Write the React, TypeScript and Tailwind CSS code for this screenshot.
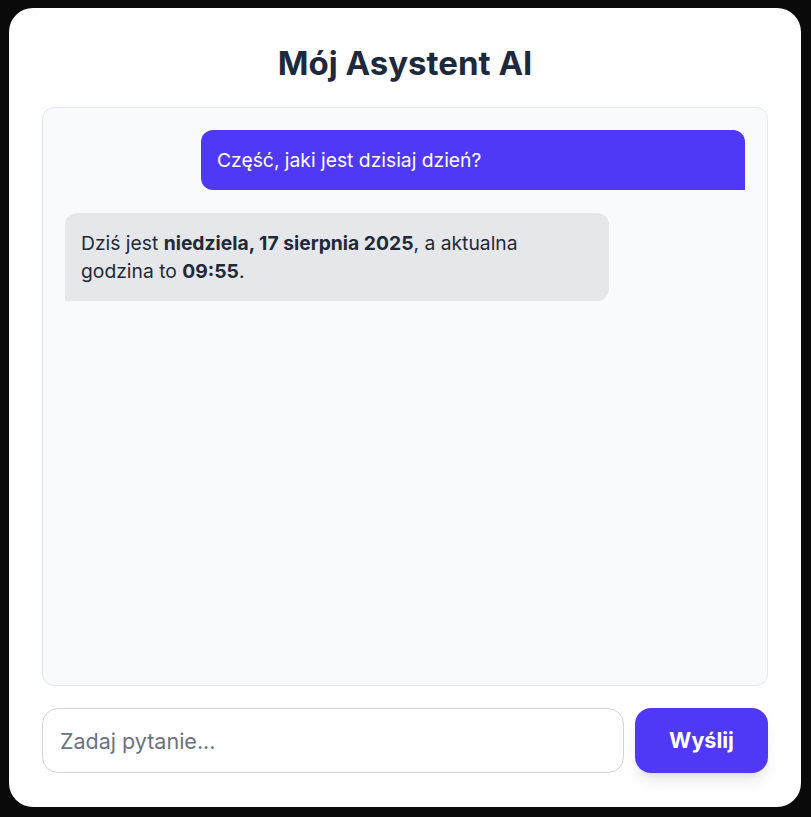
import { useState } from "react";

type Message = { role: "user" | "assistant"; content: React.ReactNode };

const messages: Message[] = [
  { role: "user", content: "Część, jaki jest dzisiaj dzień?" },
  {
    role: "assistant",
    content: (
      <>
        Dziś jest <strong className="font-bold">niedziela, 17 sierpnia 2025</strong>, a aktualna
        godzina to <strong className="font-bold">09:55</strong>.
      </>
    ),
  },
];

export default function App() {
  const [input, setInput] = useState("");

  return (
    <div
      className="h-screen bg-[#0a0a0a] pt-[8px] pb-[10px] pl-[9px] pr-[10px]"
      style={{ fontFamily: "Inter, 'Noto Sans', sans-serif" }}
    >
      <div className="h-full bg-white rounded-3xl flex flex-col px-[33px] pt-[37px] pb-[34px]">
        <h1 className="text-center text-[33px] leading-9 font-bold text-[#1e293b] mb-[26px]">
          Mój Asystent AI
        </h1>

        {/* Chat window */}
        <div className="flex-1 flex flex-col gap-[23px] bg-[#f9fafb] border border-[#e5e7eb] rounded-xl p-[22px] overflow-y-auto">
          {messages.map((m, i) => (
            <div
              key={i}
              className={`flex ${m.role === "user" ? "justify-end" : "justify-start"}`}
            >
              <div
                className={
                  m.role === "user"
                    ? "w-4/5 px-4 py-4 text-[19.3px] leading-7 rounded-xl rounded-br-none bg-[#4f39f6] text-white"
                    : "w-4/5 px-4 py-4 text-[19.3px] leading-7 rounded-xl rounded-bl-none bg-[#e5e7eb] text-[#1f2937]"
                }
              >
                {m.content}
              </div>
            </div>
          ))}
        </div>

        {/* Input row */}
        <div className="flex gap-[11px] mt-[22px]">
          <input
            value={input}
            onChange={(e) => setInput(e.target.value)}
            placeholder="Zadaj pytanie..."
            className="flex-1 h-[65px] px-[17px] text-[21.5px] text-[#1f2937] placeholder:text-[#6b7280] border border-[#d1d5db] rounded-2xl outline-none"
          />
          <button className="w-[133px] h-[65px] bg-[#4f39f6] text-white text-[21.5px] font-bold rounded-2xl shadow-lg">
            Wyślij
          </button>
        </div>
      </div>
    </div>
  );
}
